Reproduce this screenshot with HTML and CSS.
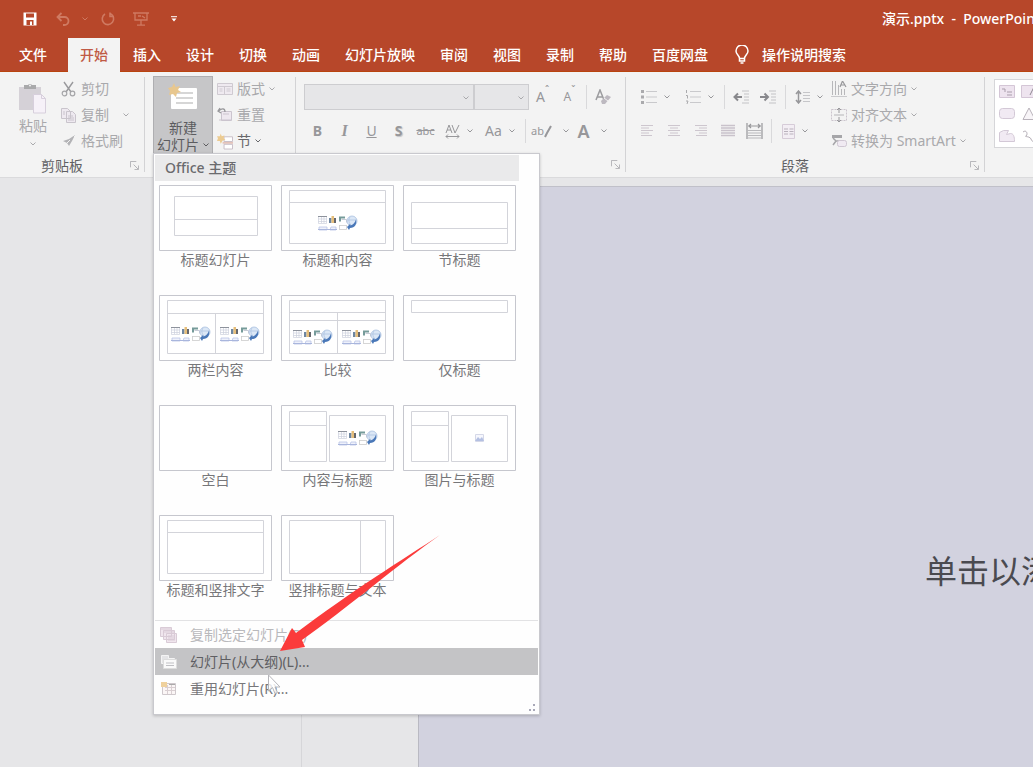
FILE: index.html
```
<!DOCTYPE html>
<html lang="zh-CN">
<head>
<meta charset="utf-8">
<title>演示.pptx - PowerPoint</title>
<link rel="stylesheet" href="styles.css">
</head>
<body>
<svg class="defs" aria-hidden="true">
  <symbol id="caret" viewBox="0 0 6 4"><path d="M.5.5 3 3 5.5.5" fill="none" stroke="currentColor"/></symbol>
  <symbol id="launcher" viewBox="0 0 10 10"><path d="M.5 7V.5H7M4 4l5 5M9.500 5v4.500H5" fill="none" stroke="currentColor"/></symbol>
  <symbol id="content" viewBox="0 0 40 16">
    <path d="M.5 1.500h8v7h-8zM.5 4h8M.5 6.500h8M3.500 2v6M6 2v6" fill="#fff" stroke="#ccd0dc" stroke-width=".7"/>
    <path d="M0 1h9v1H0z" fill="#8d929c"/>
    <path d="M11 3h2.500v5H11z" fill="#6e86a0"/><path d="M13.500 1H16v7h-2.500z" fill="#e6be7a"/><path d="M16 3h2v5h-2z" fill="#66676c"/>
    <path d="M21 1.500h6v2h-4v3h-2z" fill="#769b9a"/><path d="M23.500 4.500h5v3" fill="none" stroke="#c8ccd6"/>
    <path d="M1 15v-3h8v3zM12 15l1-3h5v3z" fill="#eef1fb" stroke="#b9c4e6" stroke-width=".8"/><path d="M0 14.500h19" stroke="#a9b6dd"/>
    <rect x="21.500" y="10.500" width="7" height="4" fill="#fff" stroke="#ccc" stroke-width=".8"/>
    <circle cx="34" cy="6" r="5" fill="#dbe7f6" stroke="#a9c0df" stroke-width=".8"/><path d="M32 2c-2 3-1 6 1 8M30 5h7" stroke="#a9c0df" fill="none" stroke-width=".7"/>
    <path d="M38 4c1 5-1 9-6 9l-1 2-2-3 3-3 .5 1.500C35 10 37 8 38 4z" fill="#4a78b8"/>
  </symbol>
</svg>

<header class="titlebar">
  <button class="qat" aria-label="保存"><svg width="14" height="14" viewBox="0 0 14 14"><path d="M.5.5h13v13H.5z" fill="#fff"/><path d="M3 1.500h8v4H3zM3.500 8h7v5h-7z" fill="#b7472a"/><path d="M7 9.500h2V13H7z" fill="#fff"/></svg></button>
  <button class="qat dim" aria-label="撤消"><svg width="14" height="14" viewBox="0 0 14 14"><path d="M5.500 1 1.500 5l4 4M2 5h6.500a4 4 0 0 1 0 8H7" fill="none" stroke="currentColor" stroke-width="1.800"/></svg></button>
  <svg class="qat-caret dim" width="6" height="4"><use href="#caret"/></svg>
  <button class="qat dim" aria-label="重复"><svg width="14" height="14" viewBox="0 0 14 14"><path d="M9.500 1.800A5.700 5.700 0 1 1 4 2M9 .5v4h4" fill="none" stroke="currentColor" stroke-width="1.600"/></svg></button>
  <button class="qat dim" aria-label="从头开始"><svg width="16" height="14" viewBox="0 0 16 14"><path d="M0 1h16M2 1v7h12V1M8 8v5M4 13.200h8M5 4h3M9 4l3 2" fill="none" stroke="currentColor" stroke-width="1.300"/></svg></button>
  <button class="qat" aria-label="自定义"><svg width="6" height="6" viewBox="0 0 6 6"><path d="M0 .7h6" stroke="#fff"/><path d="M.5 2.500h5L3 5.500z" fill="#fff"/></svg></button>
  <h1 class="doc-title">演示.pptx&nbsp; -&nbsp; PowerPoint</h1>
</header>

<nav class="tabs">
  <button class="tab file">文件</button>
  <button class="tab active">开始</button>
  <button class="tab">插入</button>
  <button class="tab">设计</button>
  <button class="tab">切换</button>
  <button class="tab">动画</button>
  <button class="tab">幻灯片放映</button>
  <button class="tab">审阅</button>
  <button class="tab">视图</button>
  <button class="tab">录制</button>
  <button class="tab">帮助</button>
  <button class="tab">百度网盘</button>
  <button class="tab tell"><svg width="14" height="19" viewBox="0 0 14 19"><path d="M4.500 13.500c0-3-3.500-4-3.500-7.500a6 6 0 0 1 12 0c0 3.500-3.500 4.500-3.500 7.500zM4.500 13.500V16h5v-2.500M5.500 18h3" fill="none" stroke="currentColor" stroke-width="1.500"/></svg>操作说明搜索</button>
</nav>

<section class="ribbon">
  <div class="group clipboard">
    <div class="body">
      <button class="big"><svg width="30" height="32" viewBox="0 0 30 32"><path d="M1 5h22v23H1z" fill="#d5d1d7"/><path d="M6 3h4a2.500 2.500 0 0 1 4 0h4v4H6z" fill="#a9a9ab"/><circle cx="12" cy="3.500" r="1" fill="#f3f3f3"/><path d="M15.500 12.500h8l4 4V31h-12z" fill="#f6f1f8" stroke="#d7cfdc"/><path d="M23.500 12.500v4h4" fill="none" stroke="#d7cfdc"/></svg><span>粘贴</span><svg width="6" height="4"><use href="#caret"/></svg></button>
      <div class="stack">
        <button class="row"><svg width="16" height="16" viewBox="0 0 16 16"><path d="M3 1l7 10M12 1 5 11" fill="none" stroke="#99999c" stroke-width="1.400"/><circle cx="3.500" cy="12.500" r="2.300" fill="none" stroke="#a5a5a8" stroke-width="1.200"/><circle cx="11.500" cy="12.500" r="2.300" fill="none" stroke="#a5a5a8" stroke-width="1.200"/></svg>剪切</button>
        <button class="row"><svg width="16" height="16" viewBox="0 0 16 16"><path d="M.5 1.500h6l3 3v7h-9zM5.500 4.500h6l3 3v8h-9z" fill="#eee9f0" stroke="#c9c4cc"/><path d="M7 9h5M7 11h6M7 13h6M2 5h2M2 7h2" stroke="#c9c4cc"/></svg>复制<svg class="far" width="6" height="4"><use href="#caret"/></svg></button>
        <button class="row"><svg width="16" height="16" viewBox="0 0 16 16"><path d="m2 8 6-2 6-4-3 6-3 5-2-3z" fill="#b3b3b6"/><path d="m6 10 3-3M12 2l2 2" stroke="#f3f3f3"/></svg>格式刷</button>
      </div>
    </div>
    <div class="caption"><span>剪贴板</span><button class="launch" aria-label="剪贴板选项"><svg width="9" height="9"><use href="#launcher"/></svg></button></div>
  </div>
  <div class="sep"></div>

  <div class="group slides">
    <div class="body">
      <button class="new-slide"><svg width="30" height="28" viewBox="0 0 30 28"><rect x="3" y="5" width="26" height="21" rx="1" fill="#fff"/><path d="M8 10h17M8 15h17M8 20h17" stroke="#c9c9c9" stroke-width="1.500"/><path d="m6 0 1.500 4L12 3l-2 4 3 2-4 1-1 4-3-3-4 1 1-4-2-3 4-1z" fill="#e8c78e"/></svg><span>新建</span><span class="line2">幻灯片<svg width="6" height="4"><use href="#caret"/></svg></span></button>
      <div class="stack">
        <button class="row"><svg width="16" height="14" viewBox="0 0 16 14"><path d="M.5 1.500h15v11H.5z" fill="#efeaf0" stroke="#cfcad1"/><path d="M1 4.500h14M7.500 4.500v8M2.500 7h3M2.500 9h3M9.500 7h4M9.500 9h4" stroke="#cfcad1"/></svg>版式<svg width="6" height="4"><use href="#caret"/></svg></button>
        <button class="row"><svg width="16" height="16" viewBox="0 0 16 16"><path d="M4.500 4.500h10v9h-10z" fill="#eee8ef" stroke="#cbc4ce"/><path d="M6 7h6M2 13h12" stroke="#cbc4ce"/><path d="M3 1 1 4l3 2M1.500 4C5 1 8 1 8 5" fill="none" stroke="#98989b" stroke-width="1.300"/></svg>重置</button>
        <button class="row dark"><svg width="16" height="17" viewBox="0 0 17 17"><path d="M7.500 3.500h9v5h-9zM7.500 11.500h9v5h-9z" fill="#fff" stroke="#c6bcc5"/><path d="M6 10h11" stroke="#d69c8c"/><path d="m4 0 1 3 3-1-1 3 2 2-3 .5L4 11 3 8 0 8l1-3-1-2 3 0z" fill="#eccb91"/></svg>节<svg width="6" height="4"><use href="#caret"/></svg></button>
      </div>
    </div>

    <div class="menu">
      <h2 class="menu-head">Office 主题</h2>
      <div class="layouts">
        <button class="layout"><svg viewBox="0 0 113 66"><path class="o" d="M.5.5h112v65H.5z"/><path class="i" d="M15.500 11.500h83v39h-83zM15.500 34.500h83"/></svg>标题幻灯片</button>
        <button class="layout"><svg viewBox="0 0 113 66"><path class="o" d="M.5.5h112v65H.5z"/><path class="i" d="M8.500 5.500h96v53h-96zM8.500 17.500h96"/><use href="#content" x="37" y="30" width="40" height="16"/></svg>标题和内容</button>
        <button class="layout"><svg viewBox="0 0 113 66"><path class="o" d="M.5.5h112v65H.5z"/><path class="i" d="M8.500 17.500h96v41h-96zM8.500 43.500h96"/></svg>节标题</button>
        <button class="layout"><svg viewBox="0 0 113 66"><path class="o" d="M.5.5h112v65H.5z"/><path class="i" d="M8.500 5.500h96v53h-96zM8.500 18.500h96M56.500 18.500v40"/><use href="#content" x="12" y="31" width="40" height="16"/><use href="#content" x="61" y="31" width="40" height="16"/></svg>两栏内容</button>
        <button class="layout"><svg viewBox="0 0 113 66"><path class="o" d="M.5.5h112v65H.5z"/><path class="i" d="M8.500 5.500h96v53h-96zM8.500 17.500h96M8.500 25.500h96M56.500 17.500v41"/><use href="#content" x="12" y="34" width="40" height="16"/><use href="#content" x="61" y="34" width="40" height="16"/></svg>比较</button>
        <button class="layout"><svg viewBox="0 0 113 66"><path class="o" d="M.5.5h112v65H.5z"/><path class="i" d="M8.500 5.500h96v12h-96z"/></svg>仅标题</button>
        <button class="layout"><svg viewBox="0 0 113 66"><path class="o" d="M.5.5h112v65H.5z"/></svg>空白</button>
        <button class="layout"><svg viewBox="0 0 113 66"><path class="o" d="M.5.5h112v65H.5z"/><path class="i" d="M8.500 6.500h37v50h-37zM8.500 20.500h37M48.500 10.500h56v46h-56z"/><use href="#content" x="57" y="25" width="40" height="16"/></svg>内容与标题</button>
        <button class="layout"><svg viewBox="0 0 113 66"><path class="o" d="M.5.5h112v65H.5z"/><path class="i" d="M8.500 6.500h37v50h-37zM8.500 20.500h37M48.500 10.500h56v46h-56z"/><path d="M72.500 29.500h8v7h-8z" fill="#f6f7fd" stroke="#d5d8e8"/><path d="m72 36 3-4 2 2 2-2 2 4z" fill="#b4c0e2"/></svg>图片与标题</button>
        <button class="layout"><svg viewBox="0 0 113 66"><path class="o" d="M.5.5h112v65H.5z"/><path class="i" d="M8.500 5.500h96v53h-96zM8.500 17.500h96"/></svg>标题和竖排文字</button>
        <button class="layout"><svg viewBox="0 0 113 66"><path class="o" d="M.5.5h112v65H.5z"/><path class="i" d="M8.500 5.500h96v53h-96zM79.500 5.500v53"/></svg>竖排标题与文本</button>
      </div>
      <div class="items">
        <button class="item off"><svg width="18" height="18" viewBox="0 0 18 18"><path d="M.5 1.500h11v9H.5zM3.500 4.500h11v9h-11zM6.500 7.500h10v9h-10z" fill="#f0e6ee" stroke="#d9cbd6"/><path d="M1 3h10M4 6h10M8 10h7M8 12h7M8 14h7" stroke="#d9cbd6"/></svg>复制选定幻灯片(D)</button>
        <button class="item hover"><svg width="18" height="18" viewBox="0 0 18 18"><path d="M1.500 2.500h7v3h6v5h-13z" fill="#e4e4e6" stroke="#f4f4f4"/><path d="M3.500 6.500h13v9h-13z" fill="#fafafa" stroke="#ddd"/><path d="M6 10h8M6 12.500h8" stroke="#c0c0c4"/></svg>幻灯片(从大纲)(L)...</button>
        <button class="item"><svg width="18" height="18" viewBox="0 0 18 18"><path d="M2.500 3.500h13v11h-13z" fill="#fbf6f6" stroke="#cfc8cc"/><path d="M5 7.500h10M5 10.500h10M7.500 5v9M11.500 5v9" stroke="#d9cfd2"/><path d="M9 4.500h6" stroke="#aaa"/><path d="M1 2h6v5H1z" fill="#efd19d"/></svg>重用幻灯片(R)...</button>
      </div>
      <div class="grip"><svg width="8" height="8" viewBox="0 0 8 8"><path d="M5 0h2v2H5zM1 5h2v2H1zM5 5h2v2H5z" fill="#a9a9b8"/></svg></div>
      <svg class="cursor" width="15" height="21" viewBox="0 0 15 21"><path d="M1.500 1v16l4-3.500 2.500 6 2.500-1-2.500-5.500h5z" fill="#fff" fill-opacity=".8" stroke="#b5b5ba"/></svg>
      <svg class="arrow" width="160" height="118" viewBox="0 0 160 118"><path d="M160 0C125 23 70 57 16 98l-4-5L0 116l25-4-3-7C66 74 120 28 160 0z" fill="#fb3b3b"/></svg>
    </div>
  </div>
  <div class="sep"></div>

  <div class="group font">
    <div class="body lines">
      <div class="line">
        <label class="combo name"><select aria-label="字体"><option></option></select><svg width="6" height="4"><use href="#caret"/></svg></label>
        <label class="combo size"><select aria-label="字号"><option></option></select><svg width="6" height="4"><use href="#caret"/></svg></label>
        <button class="tool t14">A<sup>ˆ</sup></button>
        <button class="tool t12">A<sup>ˇ</sup></button>
        <i class="vr"></i>
        <button class="tool" aria-label="清除格式"><svg width="17" height="17" viewBox="0 0 17 17"><path d="m1 11 4-10 4 10M2.500 8h5" fill="none" stroke="#9c9c9f" stroke-width="1.500"/><path d="m6 12 6-6 4 2-6 7-3 0z" fill="#bdb9c0"/><path d="m9 9 4 3" stroke="#f3f3f3"/></svg></button>
      </div>
      <div class="line">
        <button class="tool b">B</button>
        <button class="tool it">I</button>
        <button class="tool u">U</button>
        <button class="tool b shadow">S</button>
        <button class="tool strike">abc</button>
        <button class="tool drop" aria-label="字符间距"><svg width="15" height="16" viewBox="0 0 15 16"><path d="m1 10 3-8 3 8M2 7h4M7 2l3 8 4-8M1 13.500h13M3 11.500l-2 2 2 2M12 11.500l2 2-2 2" fill="none" stroke="currentColor"/></svg><svg width="6" height="4"><use href="#caret"/></svg></button>
        <button class="tool drop aa">Aa<svg width="6" height="4"><use href="#caret"/></svg></button>
        <i class="vr"></i>
        <button class="tool drop hl"><span>ab</span><svg class="pen" width="8" height="14" viewBox="0 0 8 14"><path d="m1 13 2-4 4-7" fill="none" stroke="currentColor" stroke-width="2"/></svg><svg width="6" height="4"><use href="#caret"/></svg></button>
        <button class="tool drop color">A<svg width="6" height="4"><use href="#caret"/></svg></button>
      </div>
    </div>
    <div class="caption"><span></span><button class="launch" aria-label="字体选项"><svg width="9" height="9"><use href="#launcher"/></svg></button></div>
  </div>
  <div class="sep"></div>

  <div class="group para">
    <div class="body">
      <div class="lines">
        <div class="line">
          <button class="tool drop w44" aria-label="项目符号"><svg width="16" height="14" viewBox="0 0 16 14"><path d="M0 0h3v3H0zM0 5.500h3v3H0zM0 11h3v3H0z" fill="#aaaaad"/><path d="M5 1.500h11M5 7h11M5 12.500h11" stroke="#c9c9cc"/></svg><svg width="6" height="4"><use href="#caret"/></svg></button>
          <button class="tool drop w44" aria-label="编号"><svg width="16" height="14" viewBox="0 0 16 14"><path d="M1.500 0v3M1 5.500h1.500v3M1 11h2l-1 3" fill="none" stroke="#aaaaad"/><path d="M5 1.500h11M5 7h11M5 12.500h11" stroke="#c9c9cc"/></svg><svg width="6" height="4"><use href="#caret"/></svg></button>
          <i class="vr"></i>
          <button class="tool" aria-label="减少缩进"><svg width="17" height="14" viewBox="0 0 17 14"><path d="M9 1h7M11 4h5M11 7h5M11 10h5M9 13h7" stroke="#c3c3c6"/><path d="M9 7H2M5 3.500 1.500 7 5 10.500" fill="none" stroke="#88888c" stroke-width="2"/></svg></button>
          <button class="tool" aria-label="增加缩进"><svg width="17" height="14" viewBox="0 0 17 14"><path d="M9 1h7M11 4h5M11 7h5M11 10h5M9 13h7" stroke="#c3c3c6"/><path d="M0 7h7M4.500 3.500 8 7l-3.500 3.500" fill="none" stroke="#88888c" stroke-width="2"/></svg></button>
          <i class="vr"></i>
          <button class="tool drop" aria-label="行距"><svg width="15" height="14" viewBox="0 0 15 14"><path d="M3.500 2v10M1 4l2.500-3L6 4M1 10l2.500 3L6 10" fill="none" stroke="#97979a" stroke-width="1.500"/><path d="M8 2.500h7M8 5.500h7M8 8.500h7M8 11.500h7" stroke="#c6c6c9"/></svg><svg width="6" height="4"><use href="#caret"/></svg></button>
        </div>
        <div class="line">
          <button class="tool" aria-label="左对齐"><svg width="14" height="14" viewBox="0 0 14 14"><path d="M1 1.500h12M1 4h8M1 6.500h12M1 9h8M1 11.500h11" stroke="#cdc6ce"/></svg></button>
          <button class="tool" aria-label="居中"><svg width="14" height="14" viewBox="0 0 14 14"><path d="M1 1.500h12M3 4h8M1 6.500h12M3 9h8M1 11.500h12" stroke="#cdc6ce"/></svg></button>
          <button class="tool" aria-label="右对齐"><svg width="14" height="14" viewBox="0 0 14 14"><path d="M1 1.500h12M5 4h8M1 6.500h12M5 9h8M2 11.500h11" stroke="#cdc6ce"/></svg></button>
          <button class="tool" aria-label="两端对齐"><svg width="14" height="14" viewBox="0 0 14 14"><path d="M0 1.500h14M0 4h14M0 6.500h14M0 9h14M0 11.500h14" stroke="#c9c2cb" stroke-width="1.300"/></svg></button>
          <button class="tool" aria-label="分散对齐"><svg width="17" height="17" viewBox="0 0 17 17"><path d="M1 0v16M16 0v16M2 3h13M5 1 3 3l2 2M12 1l2 2-2 2" fill="none" stroke="#97979a" stroke-width="1.200"/><path d="M1 7.500h15M1 10h15M1 12.500h15M1 15h15" stroke="#b9b9bc"/></svg></button>
          <i class="vr"></i>
          <button class="tool drop" aria-label="分栏"><svg width="13" height="15" viewBox="0 0 13 15"><path d="M.5.5h12v14H.5z" fill="#f3eef4" stroke="#d6ccd8"/><path d="M2 5h4M2 7.500h4M2 10h4M7.500 5h4M7.500 7.500h4M7.500 10h4" stroke="#b9b2bc"/></svg><svg width="6" height="4"><use href="#caret"/></svg></button>
        </div>
      </div>
      <div class="stack">
        <button class="row"><svg width="16" height="16" viewBox="0 0 16 16"><path d="M1.500 0v14M4.500 0v14M7.500 4v10M10.500 8v6M13.500 8v6" stroke="#b7b7ba"/><path d="M0 15.500h16" stroke="#c9c9cc"/><path d="m9 6 2.500-6L15 6M10 4h4" fill="none" stroke="#98989b" stroke-width="1.200"/></svg>文字方向<svg width="6" height="4"><use href="#caret"/></svg></button>
        <button class="row"><svg width="16" height="16" viewBox="0 0 16 16"><path d="M.5 2.500h15v11H.5z" fill="none" stroke="#cbc4cd" stroke-dasharray="2 1"/><path d="M8 1v5M8 10v5M6 3l2-2 2 2M6 13l2 2 2-2" fill="none" stroke="#98989b"/><path d="M3 8h10" stroke="#b5b5b8"/></svg>对齐文本<svg width="6" height="4"><use href="#caret"/></svg></button>
        <button class="row"><svg width="16" height="14" viewBox="0 0 16 14"><path d="M1 1h10v3H1z" fill="#a6a6a9"/><path d="m2 4 3 3-3 4M4 7h5" stroke="#a6a6a9" stroke-width="1.500" fill="none"/><rect x="6.500" y="6.500" width="9" height="6" rx="2" fill="#f0eaf2" stroke="#cfc6d2"/></svg>转换为 SmartArt<svg width="6" height="4"><use href="#caret"/></svg></button>
      </div>
    </div>
    <div class="caption"><span>段落</span><button class="launch" aria-label="段落选项"><svg width="9" height="9"><use href="#launcher"/></svg></button></div>
  </div>
  <div class="sep"></div>

  <div class="group drawing">
    <div class="shapes">
      <svg width="16" height="14" viewBox="0 0 16 14"><path d="M.5.5h15v12H.5z" fill="#eee4ef" stroke="#d4c6d6"/><path d="M3 4h3v3M8 7h5M8 10h5" fill="none" stroke="#a99dab"/></svg>
      <svg width="16" height="14" viewBox="0 0 16 14"><path d="M.5.5h15v12H.5z" fill="#eee4ef" stroke="#d4c6d6"/><path d="m9 10 4-8" stroke="#8f8892"/></svg>
      <svg width="16" height="14" viewBox="0 0 16 14"><rect x=".5" y="1.500" width="15" height="10" rx="3" fill="#f1eaf3" stroke="#d3c8d6"/></svg>
      <svg width="16" height="14" viewBox="0 0 16 14"><path d="m8 1 6 11.500H2z" fill="#f8f5f8" stroke="#b9b3bb"/></svg>
      <svg width="16" height="14" viewBox="0 0 16 14"><path d="M.5 12.500v-9l4-2h5l-2 4 4-1c3 0 4 3 4 8z" fill="#f1eaf3" stroke="#d3c8d6"/></svg>
      <svg width="16" height="14" viewBox="0 0 16 14"><path d="M2 3c4-3 5 3 3 4s4 0 5 3 3 3 5 2" fill="none" stroke="#b3adb5"/></svg>
    </div>
  </div>
</section>

<main class="work">
  <aside class="thumbs"></aside>
  <div class="gutter"></div>
  <section class="slide"><p class="placeholder">单击以添加标题</p></section>
</main>
</body>
</html>
```
FILE: styles.css
```
* { box-sizing: border-box; }

body {
  margin: 0;
  height: 100vh;
  display: flex;
  flex-direction: column;
  overflow: hidden;
  background: #e6e6e8;
  color: #666;
  font: 14px/20px "Noto Sans", "Noto Sans CJK SC", sans-serif;
}

button {
  border: 0;
  padding: 0;
  margin: 0;
  background: none;
  color: inherit;
  font: inherit;
  white-space: nowrap;
}

svg { display: block; flex: none; }
.defs { position: absolute; width: 0; height: 0; }

/* Title bar */
.titlebar {
  display: flex;
  align-items: center;
  height: 38px;
  padding-left: 16px;
  overflow: hidden;
  background: #b7472a;
  color: #fff;
}
.qat { display: flex; justify-content: center; width: 28px; margin-right: 5px; }
.dim { color: #cf7a62; }
.qat-caret { margin-right: 6px; }
.doc-title {
  margin: 0 0 0 auto;
  flex: 0 0 151px;
  min-width: 0;
  font-size: 14px;
  font-weight: 500;
  white-space: nowrap;
}

/* Ribbon tabs */
.tabs {
  display: flex;
  gap: 1px;
  height: 34px;
  padding-left: 7px;
  background: #b7472a;
  border-bottom: 1px solid #b9440f;
  color: #fff;
  font-weight: 500;
}
.tab { padding: 0 12px; }
.tab.file { margin-right: 8px; }
.tab.active { background: #f3f3f3; color: #c05a45; margin-bottom: -1px; }
.tab.tell { display: flex; align-items: center; gap: 13px; margin-left: 2px; }

/* Ribbon */
.ribbon {
  display: flex;
  flex: none;
  height: 106px;
  padding-top: 4px;
  background: #f3f3f3;
  border-bottom: 1px solid #dadadc;
  color: #a9a9ac;
}
.sep { flex: none; width: 1px; margin: 1px 0 5px; background: #d3d3d5; }
.group { flex: none; display: flex; flex-direction: column; }
.body { display: flex; height: 78px; }
.caption { display: flex; align-items: center; height: 25px; color: #606063; }
.caption span { flex: 1; text-align: center; }
.launch { display: flex; justify-content: center; width: 20px; color: #aeaeb2; }
.stack { display: flex; flex-direction: column; }
.row { display: flex; align-items: center; gap: 4px; height: 26px; }
.row.dark { color: #68686b; }
.far { margin-left: 10px; }

.clipboard { width: 144px; }
.clipboard .body { padding-left: 14px; gap: 9px; }
.big { display: flex; flex-direction: column; align-items: center; width: 38px; padding-top: 6px; }
.big span { margin: 2px 0 6px; }

.slides { position: relative; width: 150px; }
.slides .body { padding-left: 8px; gap: 4px; }
.new-slide {
  display: flex;
  flex-direction: column;
  align-items: center;
  width: 60px;
  padding-top: 6px;
  line-height: 17px;
  background: #c6c6c8;
  border: 1px solid #aeaeb1;
  color: #5c5c5f;
}
.new-slide svg { margin-bottom: 8px; }
.new-slide .line2 { display: flex; align-items: center; gap: 4px; }
.new-slide .line2 svg { margin: 0; }

.font { width: 329px; }
.font .body { padding-left: 8px; }
.lines { display: flex; flex-direction: column; gap: 8px; padding-top: 8px; }
.line { display: flex; align-items: center; height: 26px; }
.combo { position: relative; height: 26px; }
.combo select {
  display: block;
  appearance: none;
  width: 100%;
  height: 100%;
  background: #e6e6e8;
  border: 1px solid #cdcdd0;
  border-radius: 0;
}
.combo svg { position: absolute; right: 5px; top: 12px; }
.name { width: 170px; }
.size { width: 55px; }
.tool { display: flex; align-items: center; justify-content: center; width: 27px; height: 26px; color: #97979a; }
.drop { width: 39px; gap: 7px; }
.drop.w44 { width: 44px; }
.t14 { font-size: 14px; }
.t12 { font-size: 12px; }
.tool sup { font-size: 10px; line-height: 12px; align-self: flex-start; }
.b { font-weight: 700; }
.shadow { text-shadow: 1px 1px 1px #c4c4c6; }
.it { font-family: "Liberation Serif", serif; font-style: italic; font-weight: 700; font-size: 16px; }
.u { text-decoration: underline; }
.strike { font-size: 11px; text-decoration: line-through; }
.drop.aa { width: 44px; }
.drop.hl { width: 42px; gap: 0; font-size: 11px; }
.hl .pen { margin-right: 11px; }
.drop.color { width: 42px; gap: 11px; font-size: 18px; font-weight: 600; }
.vr { flex: none; width: 1px; height: 24px; margin: 0 3px; background: #d9d9db; }

.para { width: 358px; }
.para .body { padding-left: 7px; }
.para .lines { width: 198px; }

.drawing { flex: 1; min-width: 0; padding: 3px 0 0 9px; }
.shapes {
  display: grid;
  grid-template-columns: repeat(auto-fill, 16px);
  grid-template-columns: 16px 16px;
  gap: 8px 6px;
  padding: 5px 0 4px 4px;
  overflow: hidden;
  background: #fff;
  border: 1px solid #d6d6d9;
  border-right: 0;
}

/* New-slide gallery */
.menu {
  position: absolute;
  z-index: 2;
  left: 8px;
  top: 77px;
  width: 387px;
  padding: 1px 1px 0;
  background: #fefefe;
  border: 1px solid #c9c9ce;
  box-shadow: 0 1px 3px rgba(0, 0, 0, .2);
  color: #77777a;
}
.menu-head {
  margin: 0 19px 0 0;
  padding: 3px 10px;
  background: #eaeaeb;
  color: #6b6b6e;
  font-size: 14px;
  font-weight: 500;
}
.layouts {
  display: grid;
  grid-template-columns: repeat(3, 113px);
  grid-auto-rows: 110px;
  column-gap: 9px;
  padding: 4px 4px 0;
}
.layout { display: flex; flex-direction: column; align-items: center; line-height: 18px; }
.layout svg { width: 100%; }
.o { fill: #fff; stroke: #c6c7ce; }
.i { fill: none; stroke: #d3d4da; }
.items { border-top: 1px solid #e2e2e4; margin-top: -5px; display: flex; flex-direction: column; }
.item { display: flex; align-items: center; gap: 12px; height: 27px; padding: 0 5px; }
.item.off { color: #b9b9bc; }
.item.hover { background: #c4c4c6; color: #5f5f63; }
.grip { display: flex; justify-content: flex-end; padding: 2px; }
.arrow { position: absolute; left: 126px; top: 381px; }
.cursor { position: absolute; left: 113px; top: 520px; }

/* Workspace */
.work { display: flex; flex: 1; min-height: 0; padding-top: 8px; }
.thumbs { flex: none; width: 302px; border-right: 1px solid #d6d6d9; }
.gutter { flex: none; width: 116px; }
.slide {
  flex: 1;
  min-width: 0;
  overflow: hidden;
  padding: 360px 0 0 506px;
  background: #d2d2df;
  border-left: 1px solid #b9b9c2;
  border-top: 1px solid #c0c0c9;
}
.placeholder { margin: 0; color: #4a4a50; font-size: 32px; line-height: 48px; font-weight: 400; white-space: nowrap; }
```
